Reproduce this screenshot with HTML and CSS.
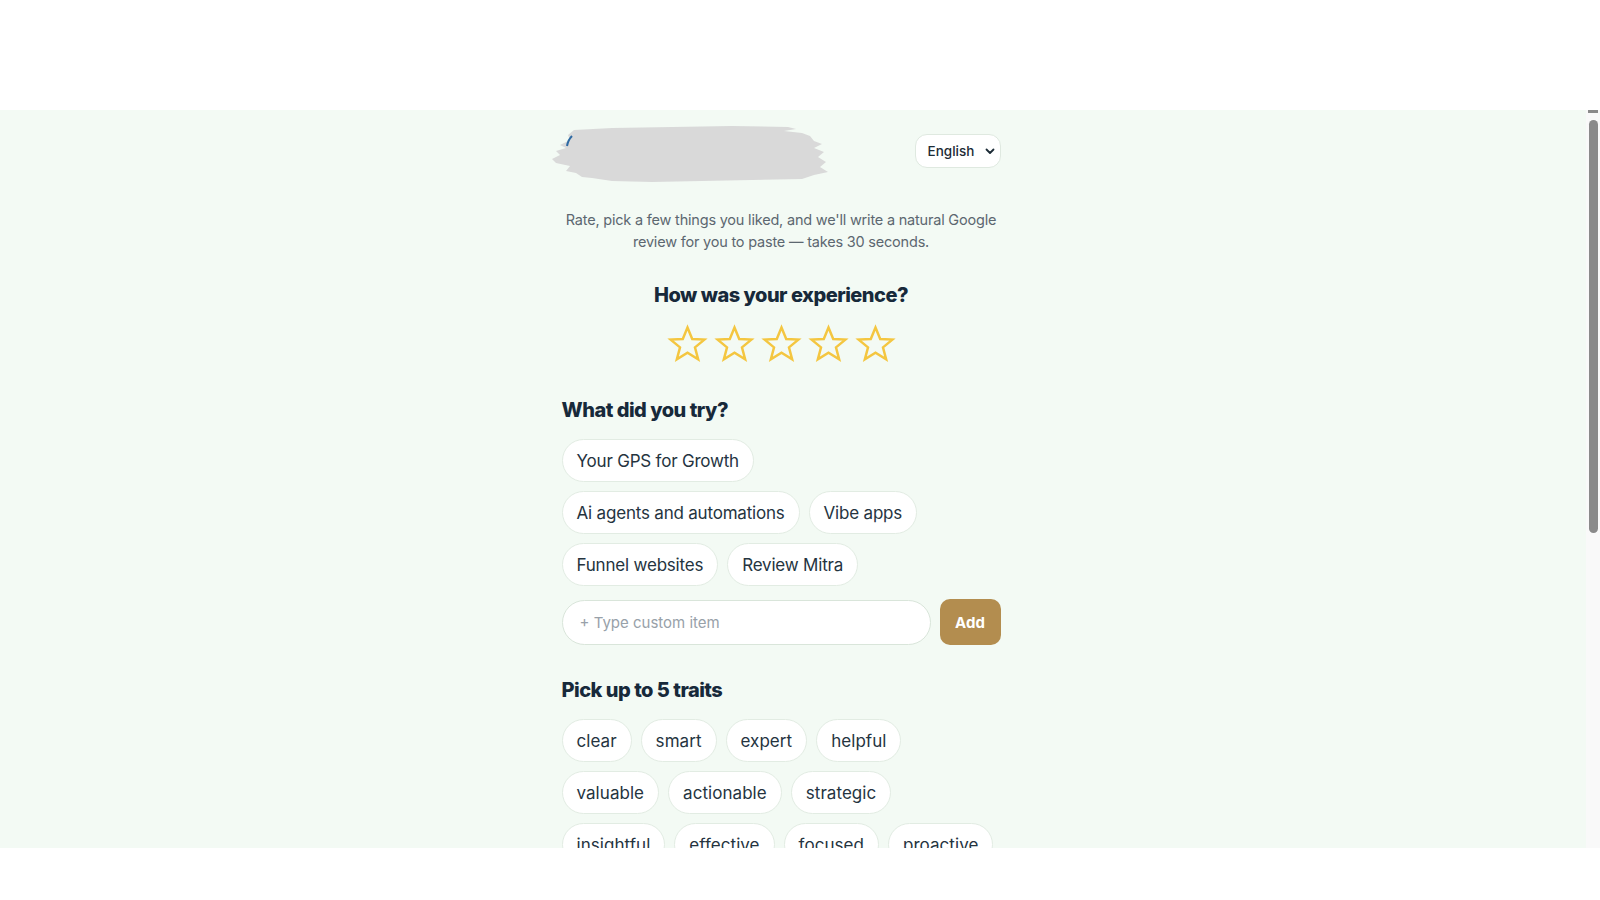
FILE: index.html
```html
<!DOCTYPE html>
<html lang="en">
<head>
<meta charset="utf-8">
<title>Leave a review</title>
<link rel="stylesheet" href="styles.css">
</head>
<body>
  <div class="frame">
    <main class="page">
      <div class="card">
        <header class="top">
          <svg class="logo" width="282" height="62" viewBox="0 0 282 62" aria-hidden="true">
            <path d="M22 6 L60 4 L120 3 L180 2 L236 3 L244 5 L232 7 L250 9 L258 12 L262 17 L270 20 L262 24 L272 28 L266 33 L274 38 L268 43 L276 48 L262 51 L250 55 L200 56 L150 57 L100 58 L60 57 L40 54 L30 53 L24 49 L14 47 L18 42 L4 39 L0 35 L8 31 L4 27 L14 24 L8 21 L18 16 L16 11 Z" fill="#d9d9d9"/>
            <path d="M20 12 Q16 16 15 22" stroke="#2f6aa3" stroke-width="2" fill="none"/>
          </svg>
          <div class="lang">
            <span>English</span>
            <svg width="10" height="7" viewBox="0 0 10 7" aria-hidden="true"><path d="M1.5 1.5 L5 5 L8.5 1.5" stroke="#1c2b36" stroke-width="1.8" fill="none" stroke-linecap="round" stroke-linejoin="round"/></svg>
          </div>
        </header>

        <p class="intro">Rate, pick a few things you liked, and we'll write a natural Google review for you to paste — takes 30 seconds.</p>

        <h2 class="title center">How was your experience?</h2>
        <div class="stars">
          <svg viewBox="0 0 40 40"><path d="M20 3.5 L24.6 14.6 L36.5 15.2 L27.3 22.8 L30.4 34.5 L20 28 L9.6 34.5 L12.7 22.8 L3.5 15.2 L15.4 14.6 Z"/></svg>
          <svg viewBox="0 0 40 40"><path d="M20 3.5 L24.6 14.6 L36.5 15.2 L27.3 22.8 L30.4 34.5 L20 28 L9.6 34.5 L12.7 22.8 L3.5 15.2 L15.4 14.6 Z"/></svg>
          <svg viewBox="0 0 40 40"><path d="M20 3.5 L24.6 14.6 L36.5 15.2 L27.3 22.8 L30.4 34.5 L20 28 L9.6 34.5 L12.7 22.8 L3.5 15.2 L15.4 14.6 Z"/></svg>
          <svg viewBox="0 0 40 40"><path d="M20 3.5 L24.6 14.6 L36.5 15.2 L27.3 22.8 L30.4 34.5 L20 28 L9.6 34.5 L12.7 22.8 L3.5 15.2 L15.4 14.6 Z"/></svg>
          <svg viewBox="0 0 40 40"><path d="M20 3.5 L24.6 14.6 L36.5 15.2 L27.3 22.8 L30.4 34.5 L20 28 L9.6 34.5 L12.7 22.8 L3.5 15.2 L15.4 14.6 Z"/></svg>
        </div>

        <h2 class="title section">What did you try?</h2>
        <div class="chips">
          <div class="row">
            <span class="chip">Your GPS for Growth</span>
          </div>
          <div class="row">
            <span class="chip">Ai agents and automations</span>
            <span class="chip">Vibe apps</span>
          </div>
          <div class="row">
            <span class="chip">Funnel websites</span>
            <span class="chip">Review Mitra</span>
          </div>
        </div>

        <div class="custom">
          <div class="field">+ Type custom item</div>
          <button class="add">Add</button>
        </div>

        <h2 class="title section traits-title">Pick up to 5 traits</h2>
        <div class="chips traits">
          <div class="row">
            <span class="chip">clear</span>
            <span class="chip">smart</span>
            <span class="chip">expert</span>
            <span class="chip">helpful</span>
          </div>
          <div class="row">
            <span class="chip">valuable</span>
            <span class="chip">actionable</span>
            <span class="chip">strategic</span>
          </div>
          <div class="row">
            <span class="chip">insightful</span>
            <span class="chip">effective</span>
            <span class="chip">focused</span>
            <span class="chip">proactive</span>
          </div>
        </div>
      </div>
    </main>
    <div class="scrollbar">
      <span class="arrow"></span>
      <span class="thumb"></span>
    </div>
  </div>
</body>
</html>
```

FILE: styles.css
```css
* { box-sizing: border-box; }

html, body {
  margin: 0;
  padding: 0;
  background: #ffffff;
  font-family: Inter, "Noto Sans", "Liberation Sans", sans-serif;
  color: #1c2b36;
}

body {
  padding-top: 110px;
  height: 900px;
  overflow: hidden;
}

/* visible viewport band */
.frame {
  display: flex;
  height: 738px;
  overflow: hidden;
  background: #f3faf4;
}

.page {
  flex: 1;
  display: flex;
  justify-content: center;
  padding: 14px 24px 0 0;
}

.card {
  width: 439px;
}

.top {
  display: flex;
  justify-content: space-between;
  align-items: flex-start;
}

.logo {
  display: block;
  margin-left: -10px;
}

.lang {
  margin-top: 10px;
  width: 86px;
  height: 34px;
  border: 1.5px solid #dfe9e0;
  border-radius: 12px;
  background: #ffffff;
  display: flex;
  align-items: center;
  justify-content: space-between;
  padding: 0 5px 0 12px;
  font-size: 13.5px;
  font-weight: 500;
  color: #1c2b36;
}

.intro {
  margin: 23px -4px 0;
  text-align: center;
  font-size: 14.5px;
  line-height: 21.5px;
  color: #5c6770;
  letter-spacing: -0.2px;
}

.title {
  margin: 0;
  font-size: 20px;
  line-height: 28px;
  font-weight: 800;
  color: #17293a;
  letter-spacing: -0.5px;
}

.center {
  margin-top: 29px;
  text-align: center;
}

.stars {
  margin-top: 15px;
  display: flex;
  justify-content: center;
  gap: 6px;
}

.stars svg {
  width: 41px;
  height: 41px;
  display: block;
}

.stars path {
  fill: none;
  stroke: #f4c640;
  stroke-width: 2.4;
  stroke-linejoin: miter;
}

.section {
  margin-top: 31px;
}

.chips {
  margin-top: 15px;
  display: flex;
  flex-direction: column;
  gap: 9px;
}

.row {
  display: flex;
  gap: 9px;
}

.chip {
  height: 43px;
  display: inline-flex;
  align-items: center;
  padding: 0 14px;
  background: #ffffff;
  border: 1.5px solid #e2ece3;
  border-radius: 22px;
  font-size: 17px;
  color: #25343f;
  white-space: nowrap;
  letter-spacing: -0.2px;
}

/* lowercase trait words set a touch looser */
.traits .chip {
  letter-spacing: 0.05px;
}

.custom {
  margin-top: 14px;
  display: flex;
  gap: 9px;
}

.field {
  flex: 1;
  height: 45px;
  border: 1.5px solid #d9e5da;
  border-radius: 23px;
  background: #ffffff;
  display: flex;
  align-items: center;
  padding-left: 17px;
  font-size: 15px;
  color: #98a1a9;
}

.add {
  width: 61px;
  height: 46px;
  margin-top: -1px;
  border: none;
  border-radius: 10px;
  background: #b38d4f;
  color: #ffffff;
  font-family: inherit;
  font-size: 15px;
  font-weight: 700;
}

.traits-title {
  margin-top: 31px;
}

.scrollbar {
  width: 14px;
  background: #f9f9f9;
  position: relative;
}

.arrow {
  position: absolute;
  top: 0;
  left: 2px;
  width: 10px;
  height: 3px;
  background: #8a8a8a;
}

.thumb {
  position: absolute;
  top: 10px;
  left: 3px;
  width: 9px;
  height: 413px;
  border-radius: 5px;
  background: #8a8a8a;
}
```
